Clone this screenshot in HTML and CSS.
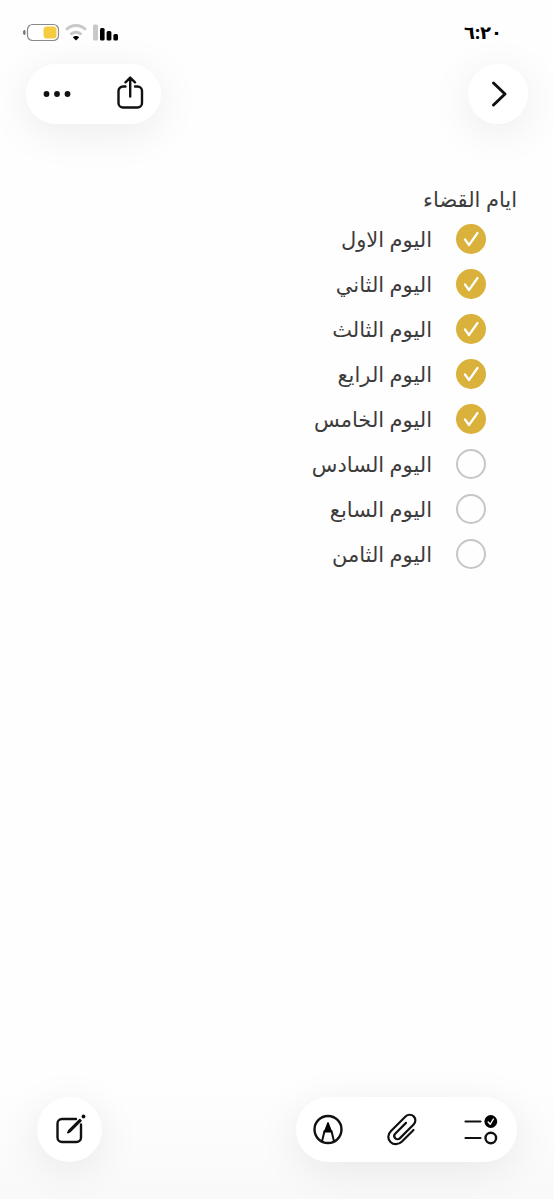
FILE: index.html
```html
<!DOCTYPE html>
<html lang="ar" dir="rtl">
<head>
    <meta charset="UTF-8">
    <meta name="viewport" content="width=device-width, initial-scale=1.0">
    <title>ايام القضاء</title>
    <link rel="stylesheet" href="styles.css">
</head>
<body>

<div class="status-bar">
    <time datetime="06:20">٦:٢٠</time>
    <svg class="status-icons" width="96" height="20" viewBox="0 0 96 20" aria-hidden="true">
        <path d="M2 8.500v4a2 2 0 0 1 0-4z" fill="#777" stroke="#777"/>
        <rect x="4.500" y="2.500" width="31" height="16" rx="5" fill="#fff" stroke="#8a8a8a" stroke-width="1.200"/>
        <rect x="20.500" y="4.500" width="13" height="12" rx="3.500" fill="#f5cb3f"/>
        <g fill="none" stroke="#c8c8c8" stroke-width="3">
            <path d="M43.200 7.800a13.500 13.500 0 0 1 19.600 0"/>
            <path d="M47.500 12.500a8 8 0 0 1 11 0"/>
        </g>
        <path d="M53 18.500l-3.200-3.200a4.500 4.500 0 0 1 6.400 0z" fill="#000"/>
        <rect x="70" y="2.500" width="5" height="16" rx="1.500" fill="#c8c8c8"/>
        <rect x="77" y="6" width="4.600" height="12.500" rx="1.500"/>
        <rect x="83.600" y="9" width="4.800" height="9.500" rx="1.500"/>
        <rect x="90.400" y="12" width="4.600" height="6.500" rx="1.500"/>
    </svg>
</div>

<header class="top-bar">
    <button class="round-btn" aria-label="رجوع">
        <svg width="30" height="30" viewBox="0 0 30 30"><path d="M10.500 4L22 15 10.500 26" stroke-width="3"/></svg>
    </button>
    <div class="pill">
        <button aria-label="مشاركة">
            <svg width="30" height="36" viewBox="0 0 30 36">
                <path d="M10.500 10.500H8a4.500 4.500 0 0 0-4.500 4.500V27A4.500 4.500 0 0 0 8 31.500H22.500A4.500 4.500 0 0 0 27 27V15a4.500 4.500 0 0 0-4.500-4.500H20M15.200 20.500V1.800M10.500 6.300l4.700-4.700L20 6.300"/>
            </svg>
        </button>
        <button aria-label="المزيد">
            <svg class="solid" width="30" height="30" viewBox="0 0 30 30">
                <circle cx="4.500" cy="15" r="2.900"/>
                <circle cx="15" cy="15" r="2.900"/>
                <circle cx="25.500" cy="15" r="2.900"/>
            </svg>
        </button>
    </div>
</header>

<main class="note">
    <h1>ايام القضاء</h1>
    <ul id="list">
        <li><label><span class="check"><input type="checkbox" checked><svg viewBox="0 0 30 30"><path d="M9 15.500L13 21 21.500 9"/></svg></span>اليوم الاول</label></li>
        <li><label><span class="check"><input type="checkbox" checked><svg viewBox="0 0 30 30"><path d="M9 15.500L13 21 21.500 9"/></svg></span>اليوم الثاني</label></li>
        <li><label><span class="check"><input type="checkbox" checked><svg viewBox="0 0 30 30"><path d="M9 15.500L13 21 21.500 9"/></svg></span>اليوم الثالث</label></li>
        <li><label><span class="check"><input type="checkbox" checked><svg viewBox="0 0 30 30"><path d="M9 15.500L13 21 21.500 9"/></svg></span>اليوم الرايع</label></li>
        <li><label><span class="check"><input type="checkbox" checked><svg viewBox="0 0 30 30"><path d="M9 15.500L13 21 21.500 9"/></svg></span>اليوم الخامس</label></li>
        <li><label><span class="check"><input type="checkbox"><svg viewBox="0 0 30 30"><path d="M9 15.500L13 21 21.500 9"/></svg></span>اليوم السادس</label></li>
        <li><label><span class="check"><input type="checkbox"><svg viewBox="0 0 30 30"><path d="M9 15.500L13 21 21.500 9"/></svg></span>اليوم السابع</label></li>
        <li><label><span class="check"><input type="checkbox"><svg viewBox="0 0 30 30"><path d="M9 15.500L13 21 21.500 9"/></svg></span>اليوم الثامن</label></li>
    </ul>
</main>

<footer class="bottom-bar">
    <div class="pill tools">
        <button aria-label="قائمة تحقق">
            <svg width="36" height="36" viewBox="0 0 36 36">
                <path d="M2.500 9.500H17.500M2.500 26H17.500" stroke-width="2.200"/>
                <circle cx="27.800" cy="9.500" r="6.400" fill="#000" stroke="none"/>
                <path d="M25.200 10l2 2.300 3.200-5.300" stroke="#fff" stroke-width="1.400"/>
                <circle cx="27.800" cy="26" r="5.300"/>
            </svg>
        </button>
        <button aria-label="إرفاق">
            <svg width="36" height="36" viewBox="4 1 36 36">
                <path d="M30.500 19L19 30.500C15.500 34 10.500 34 7.500 31C4.500 28 4.500 23.500 8 20L22.500 5.500C24.800 3.200 28.500 3.200 30.700 5.400C32.900 7.600 32.900 11.200 30.600 13.500L17 27.100C15.600 28.500 13.500 28.500 12.200 27.200C10.900 25.900 11 23.900 12.400 22.500L23 11.900" stroke-width="2.200"/>
            </svg>
        </button>
        <button aria-label="رسم">
            <svg width="36" height="36" viewBox="0 0 36 36">
                <circle cx="18" cy="17.500" r="13.500"/>
                <path d="M12 29.500l2.500-10.500h7l2.500 10.500" stroke-width="2"/>
                <path d="M13.600 20.500L17.200 10.800q.8-1.600 1.600 0L22.400 20.500z" fill="#000" stroke="none"/>
            </svg>
        </button>
    </div>
    <button class="round-btn" aria-label="ملاحظة جديدة">
        <svg width="36" height="36" viewBox="0 0 36 36">
            <path d="M24 7H10A4.500 4.500 0 0 0 5.500 11.500V25.500A4.500 4.500 0 0 0 10 30H24.500A4.500 4.500 0 0 0 29 25.500V12.500" stroke-width="2.400"/>
            <path d="M15.800 20.700l1.200-2.400L27.800 7.500l1.200 1.200L18.200 19.500z" fill="#111" stroke-width="1.600"/>
            <circle cx="31.500" cy="4.500" r="1.900" fill="#111" stroke="none"/>
        </svg>
    </button>
</footer>

</body>
</html>
```
FILE: styles.css
```css
* {
    box-sizing: border-box;
}

body {
    margin: 0;
    min-height: 100vh;
    display: flex;
    flex-direction: column;
    font-family: "Noto Sans", "DejaVu Sans", sans-serif;
    color: #3c3c3c;
    background: linear-gradient(to top, #f9f9f9, rgba(255, 255, 255, 0) 110px) #fefefe;
}

button {
    display: flex;
    align-items: center;
    justify-content: center;
    padding: 0;
    border: none;
    background: none;
    cursor: pointer;
}

button svg {
    fill: none;
    stroke: #111;
    stroke-width: 2.400;
    stroke-linecap: round;
    stroke-linejoin: round;
}

button svg.solid {
    fill: #111;
    stroke: none;
}

.status-bar {
    display: flex;
    justify-content: space-between;
    align-items: center;
    height: 64px;
    padding: 0 52px 0 23px;
}

.status-bar time {
    font-size: 18px;
    font-weight: bold;
    color: #000;
}

.top-bar {
    display: flex;
    justify-content: space-between;
    padding: 0 26px;
}

.round-btn,
.pill {
    height: 60px;
    background: #fff;
    border-radius: 33px;
    box-shadow: 0 8px 44px rgba(0, 0, 0, 0.08);
}

.round-btn {
    width: 60px;
}

.pill {
    display: flex;
    align-items: center;
    justify-content: space-between;
    width: 135px;
    padding: 0 16px;
}

.note {
    flex: 1;
    padding: 59px 37px 0;
}

h1 {
    margin: 0;
    font-size: 21px;
    font-weight: normal;
    line-height: 33px;
}

ul {
    list-style: none;
    margin: 0;
    padding: 0 31px 0 0;
}

label {
    display: flex;
    align-items: center;
    gap: 24px;
    height: 45px;
    font-size: 21px;
}

.check {
    display: grid;
    width: 30px;
    height: 30px;
}

.check input,
.check svg {
    grid-area: 1 / 1;
    width: 30px;
    height: 30px;
    margin: 0;
}

.check input {
    appearance: none;
    border: 2px solid #c6c6c6;
    border-radius: 50%;
}

.check input:checked {
    border: none;
    background: #dab13b;
}

.check svg {
    fill: none;
    stroke: #fff;
    stroke-width: 2.200;
    stroke-linecap: round;
    stroke-linejoin: round;
    visibility: hidden;
    pointer-events: none;
}

.check input:checked + svg {
    visibility: visible;
}

.bottom-bar {
    display: flex;
    justify-content: space-between;
    padding: 0 37px 37px;
}

.bottom-bar .round-btn,
.bottom-bar .pill {
    height: 65px;
}

.bottom-bar .round-btn {
    width: 65px;
}

.bottom-bar .tools {
    width: 221px;
    padding: 0 18px 0 14px;
}
```
